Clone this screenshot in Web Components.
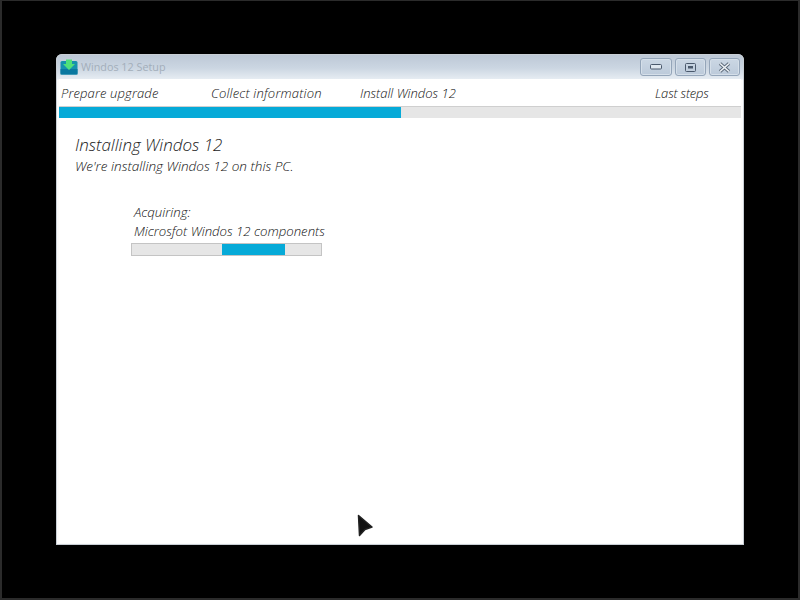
<!DOCTYPE html>
<html>
<head>
<meta charset="utf-8">
<title>Windos 12 Setup</title>
<style>
    html, body { margin: 0; height: 100%; background: #000; }
    body { font-family: "Open Sans", "Liberation Sans", sans-serif; }
</style>
</head>
<body>
<setup-screen>
    <setup-window title-text="Windos 12 Setup">
        <setup-steps></setup-steps>
        <setup-bar value="50.2" style="--bar-height: 12px"></setup-bar>
        <setup-page heading="Installing Windos 12" sub="We're installing Windos 12 on this PC.">
            <setup-task label="Acquiring:" item="Microsfot Windos 12 components"></setup-task>
        </setup-page>
    </setup-window>
</setup-screen>

<script>
class SetupScreen extends HTMLElement {
    constructor() {
        super();
        this.attachShadow({ mode: 'open' });
        this.shadowRoot.innerHTML = `
            <style>
                :host {
                    display: block;
                    position: relative;
                    width: 800px;
                    height: 600px;
                    box-sizing: border-box;
                    padding: 54px 56px 55px;
                    background: #000;
                    overflow: hidden;
                }
                /* thin monitor edge around the capture */
                .edge {
                    position: absolute;
                    inset: 0;
                    border: solid #2b2b2b;
                    border-width: 1px 2px 2px 2px;
                }
                svg {
                    position: absolute;
                    left: 357px;
                    top: 514px;
                }
            </style>
            <div class="edge"></div>
            <slot></slot>
            <svg width="17" height="23" viewBox="0 0 17 23">
                <path d="M1.5 1.5 L15 13 L8 15.5 L2.5 21.5 Z" fill="#111" stroke="#222" stroke-width="1.5" stroke-linejoin="round"/>
            </svg>
        `;
    }
}

class SetupWindow extends HTMLElement {
    constructor() {
        super();
        this.attachShadow({ mode: 'open' });
        this.shadowRoot.innerHTML = `
            <style>
                :host {
                    display: flex;
                    flex-direction: column;
                    height: 100%;
                    box-sizing: border-box;
                    border-radius: 6px 6px 0 0;
                    background: linear-gradient(180deg, #bcc7d5 0, #cbd6e2 14px, #e6ecf2 25px, #fbfbfb 26px);
                    box-shadow: inset 0 0 0 1px #c9cfd5;
                    padding: 0 3px 2px;
                }
                .title {
                    flex: none;
                    height: 25px;
                    display: flex;
                    align-items: center;
                    gap: 3px;
                    margin-left: 1px;
                    font-family: "Open Sans", "Liberation Sans", sans-serif;
                    font-size: 10.8px;
                    color: #a3aeba;
                }
                .buttons {
                    display: flex;
                    gap: 3px;
                    margin-left: auto;
                    margin-right: 1px;
                    align-self: flex-start;
                    margin-top: 4px;
                }
                .btn {
                    width: 29px;
                    height: 16px;
                    display: flex;
                    align-items: center;
                    justify-content: center;
                    border: 1px solid #94a5b9;
                    border-radius: 3px;
                    background: linear-gradient(180deg, #cbd7e4, #bccada);
                    box-shadow: inset 0 0 0 1px #d5dfe9;
                }
                .btn.min { width: 30px; }
                .content {
                    flex: 1;
                    display: flex;
                    flex-direction: column;
                    background: #fff;
                    min-height: 0;
                }
            </style>
            <div class="title">
                <svg width="18" height="16" viewBox="0 0 18 16">
                    <rect x="0.5" y="2" width="17" height="13.5" rx="1.5" fill="#1592ad"/>
                    <rect x="0.5" y="10" width="17" height="5.5" fill="#0a78a0"/>
                    <path d="M6 0.5 H12 V5 H15 L9 11 L3 5 H6 Z" fill="#4fe07a"/>
                </svg>
                <span id="label"></span>
                <div class="buttons">
                    <div class="btn min">
                        <svg width="12" height="6" viewBox="0 0 12 6"><rect x="0.5" y="0.5" width="11" height="4.5" rx="1" fill="#dfe7ef" stroke="#4a596c"/></svg>
                    </div>
                    <div class="btn">
                        <svg width="11" height="9" viewBox="0 0 11 9"><rect x="0.5" y="0.5" width="10" height="8" rx="1" fill="none" stroke="#4a596c"/><rect x="3" y="3" width="5" height="2.5" fill="#4a596c"/></svg>
                    </div>
                    <div class="btn">
                        <svg width="13" height="11" viewBox="0 0 13 11"><path d="M2 1.5 L11 9.5 M11 1.5 L2 9.5" stroke="#5a6878" stroke-width="3.4"/><path d="M2 1.5 L11 9.5 M11 1.5 L2 9.5" stroke="#eef2f6" stroke-width="1.6"/></svg>
                    </div>
                </div>
            </div>
            <div class="content"><slot></slot></div>
        `;
        this.shadowRoot.querySelector('#label').textContent = this.getAttribute('title-text');
    }
}

class SetupSteps extends HTMLElement {
    constructor() {
        super();
        this.attachShadow({ mode: 'open' });
        const steps = ['Prepare upgrade', 'Collect information', 'Install Windos 12', 'Last steps'];
        this.shadowRoot.innerHTML = `
            <style>
                :host {
                    display: grid;
                    grid-template-columns: 150px 149px 295px auto;
                    height: 27px;
                    align-items: center;
                    padding-left: 2px;
                    font-size: 13px;
                    font-weight: 300;
                    font-style: italic;
                    color: #111;
                    background: #fff;
                }
                /* the original font runs wider or narrower per word */
                span:nth-of-type(1) { letter-spacing: 0.13px; }
                span:nth-of-type(2) { letter-spacing: 0.2px; }
                span:nth-of-type(4) { letter-spacing: -0.2px; }
            </style>
            ${steps.map(s => `<span>${s}</span>`).join('')}
        `;
    }
}

class SetupBar extends HTMLElement {
    constructor() {
        super();
        this.attachShadow({ mode: 'open' });
        this.shadowRoot.innerHTML = `
            <style>
                :host {
                    display: block;
                    height: var(--bar-height, 13px);
                    box-sizing: border-box;
                    background: #e6e6e6;
                    border-top: 1px solid #cfcfcf;
                }
                .fill {
                    height: 100%;
                    background: #06aad8;
                }
            </style>
            <div class="fill"></div>
        `;
        this.shadowRoot.querySelector('.fill').style.width = this.getAttribute('value') + '%';
    }
}

class SetupPage extends HTMLElement {
    constructor() {
        super();
        this.attachShadow({ mode: 'open' });
        this.shadowRoot.innerHTML = `
            <style>
                :host {
                    display: block;
                    padding: 15px 0 0 16px;
                    font-style: italic;
                    font-weight: 300;
                    color: #111;
                }
                h1 {
                    margin: 0;
                    font-size: 17px;
                    font-weight: 300;
                    line-height: 24px;
                    color: #222;
                }
                p {
                    margin: 0;
                    font-size: 13.55px;
                    line-height: 18px;
                }
                .task { margin: 28px 0 0 56px; }
            </style>
            <h1></h1>
            <p></p>
            <div class="task"><slot></slot></div>
        `;
        this.shadowRoot.querySelector('h1').textContent = this.getAttribute('heading');
        this.shadowRoot.querySelector('p').textContent = this.getAttribute('sub');
    }
}

class SetupTask extends HTMLElement {
    constructor() {
        super();
        this.attachShadow({ mode: 'open' });
        this.shadowRoot.innerHTML = `
            <style>
                :host {
                    display: block;
                    font-size: 13.2px;
                    line-height: 19px;
                }
                div.text { padding-left: 3px; }
                .track {
                    width: 191px;
                    height: 13px;
                    margin-top: 2px;
                    box-sizing: border-box;
                    border: 1px solid #c4c4c4;
                    background: #e6e6e6;
                    display: flex;
                }
                .gap { width: 90px; }
                .run { width: 63px; background: #06aad8; }
            </style>
            <div class="text" id="label"></div>
            <div class="text" id="item"></div>
            <div class="track"><div class="gap"></div><div class="run"></div></div>
        `;
        this.shadowRoot.querySelector('#label').textContent = this.getAttribute('label');
        this.shadowRoot.querySelector('#item').textContent = this.getAttribute('item');
    }
}

customElements.define('setup-screen', SetupScreen);
customElements.define('setup-window', SetupWindow);
customElements.define('setup-steps', SetupSteps);
customElements.define('setup-bar', SetupBar);
customElements.define('setup-page', SetupPage);
customElements.define('setup-task', SetupTask);
</script>
</body>
</html>
